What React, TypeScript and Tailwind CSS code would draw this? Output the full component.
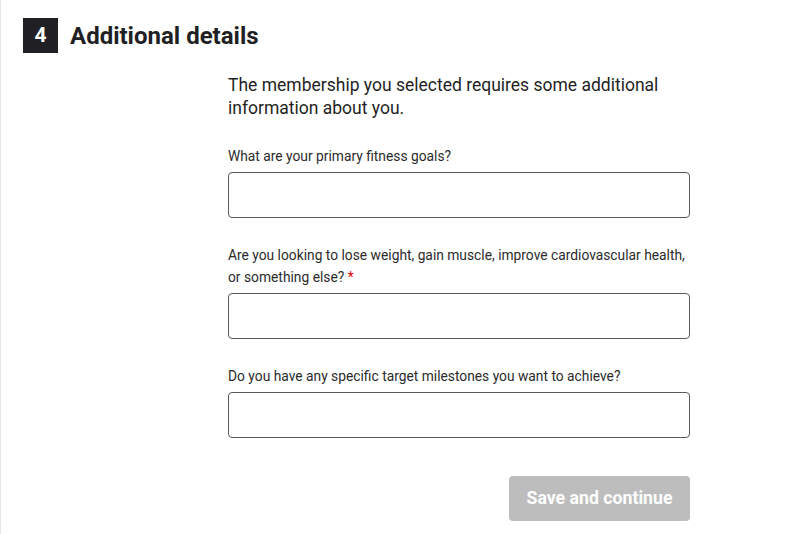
export default function App() {
  const fields = [
    { id: 'goals', label: 'What are your primary fitness goals?', required: false },
    {
      id: 'focus',
      label: 'Are you looking to lose weight, gain muscle, improve cardiovascular health, or something else?',
      required: true,
    },
    { id: 'milestones', label: 'Do you have any specific target milestones you want to achieve?', required: false },
  ];

  return (
    <div
      className="min-h-[534px] w-[792px] bg-white border-l border-[#e6e6e6] pt-[18px] pl-[22px] text-[#1f1f24]"
      style={{ fontFamily: 'Roboto, "Liberation Sans", sans-serif' }}
    >
      {/* Заголовок шага */}
      <div className="flex items-center gap-3">
        <div className="w-[35px] h-[35px] bg-[#1f1f24] text-white flex items-center justify-center text-[21px] font-bold">
          4
        </div>
        <h2 className="text-[24px] font-bold leading-none">Additional details</h2>
      </div>

      <div className="ml-[205px] w-[462px] pt-[21px]">
        <p className="text-[17.5px] leading-[23px] text-[#1f1f24]">
          The membership you selected requires some additional information about you.
        </p>

        <div className="mt-[25px] flex flex-col gap-[26px]">
          {fields.map((f) => (
            <div key={f.id}>
              <label htmlFor={f.id} className="block text-[13.8px] leading-[22px] text-[#2b2b2b] mb-[5px]">
                {f.label}
                {f.required && <span className="text-[#e00000]"> *</span>}
              </label>
              <input
                id={f.id}
                type="text"
                className="block w-full h-[46px] rounded-[4px] border border-[#5a5a5a] px-3 outline-none"
              />
            </div>
          ))}
        </div>

        <div className="flex justify-end mt-[38px]">
          <button
            disabled
            className="w-[181px] h-[45px] rounded-[4px] bg-[#bdbdbd] text-white text-[17.7px] font-bold"
          >
            Save and continue
          </button>
        </div>
      </div>
    </div>
  );
}
